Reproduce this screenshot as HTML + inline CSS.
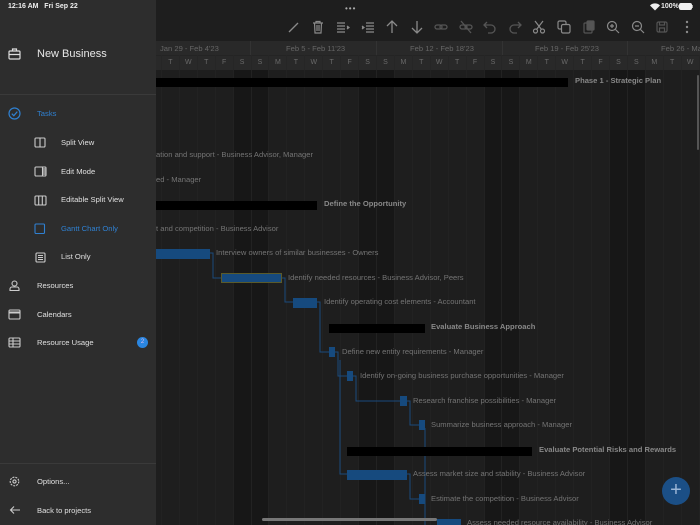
<!DOCTYPE html>
<html><head><meta charset="utf-8"><style>
*{margin:0;padding:0;box-sizing:border-box}
html,body{width:700px;height:525px;overflow:hidden}
body{background:#1e1e1e;font-family:"Liberation Sans",sans-serif;position:relative}
.abs{position:absolute}
.hdr{position:absolute;left:144px;top:55px;height:15px;display:flex}
.hdr span{width:17.93px;flex:none;text-align:center;font-size:7px;color:#6a6a6a;line-height:15px;border-right:1px solid #262626}
.cols{position:absolute;left:144px;top:70px;height:455px;display:flex}
.cols div{width:17.93px;flex:none;border-right:1px solid #222}
.cols div.w{background:#171717}
.t{position:absolute;font-size:7.6px;color:#747474;white-space:nowrap;line-height:10px}
.b{font-weight:bold;color:#888}
.bar{position:absolute;height:10px;background:#164a7e}
.sum{position:absolute;height:9px;background:#000}
.side{position:absolute;left:0;top:0;width:156px;height:525px;background:#2d2d2d}
.it{position:absolute;font-size:7.6px;color:#e0e0e0;white-space:nowrap}
.tb svg{position:absolute;top:20px}
</style></head><body>
<div class="abs" style="left:156px;top:41px;width:544px;height:29px;background:#292929"></div>
<div class="abs" style="left:156px;top:55px;width:544px;height:1px;background:#242424"></div>
<div class="abs" style="left:250px;top:41px;width:1px;height:14px;background:#333"></div>
<div class="abs" style="left:376px;top:41px;width:1px;height:14px;background:#333"></div>
<div class="abs" style="left:502px;top:41px;width:1px;height:14px;background:#333"></div>
<div class="abs" style="left:627px;top:41px;width:1px;height:14px;background:#333"></div>
<div class="t" style="left:160px;top:44px;color:#666">Jan 29 - Feb 4'23</div>
<div class="t" style="left:286px;top:44px;color:#666">Feb 5 - Feb 11'23</div>
<div class="t" style="left:410px;top:44px;color:#666">Feb 12 - Feb 18'23</div>
<div class="t" style="left:535px;top:44px;color:#666">Feb 19 - Feb 25'23</div>
<div class="t" style="left:661px;top:44px;color:#666">Feb 26 - Mar</div>
<div class="hdr"><span>M</span><span>T</span><span>W</span><span>T</span><span>F</span><span>S</span><span>S</span><span>M</span><span>T</span><span>W</span><span>T</span><span>F</span><span>S</span><span>S</span><span>M</span><span>T</span><span>W</span><span>T</span><span>F</span><span>S</span><span>S</span><span>M</span><span>T</span><span>W</span><span>T</span><span>F</span><span>S</span><span>S</span><span>M</span><span>T</span><span>W</span></div>
<div class="cols"><div></div><div></div><div></div><div></div><div></div><div class="w"></div><div class="w"></div><div></div><div></div><div></div><div></div><div></div><div class="w"></div><div class="w"></div><div></div><div></div><div></div><div></div><div></div><div class="w"></div><div class="w"></div><div></div><div></div><div></div><div></div><div></div><div class="w"></div><div class="w"></div><div></div><div></div><div></div></div>

<svg class="abs" style="left:0;top:0" width="700" height="525"><g fill="none" stroke="#1a4a7c" stroke-width="1">
<path d="M210 253H213V278H221"/><path d="M282 278H285V302H293"/><path d="M317 302H320V352H329"/>
<path d="M335 352H338V376H347"/><path d="M353 376H356V401H400"/><path d="M407 401H410V425H419"/>
<path d="M340 360V474H347"/><path d="M407 474H410V499H419"/><path d="M425 428V525"/><path d="M431 520H437"/>
</g></svg>

<div class="sum" style="left:156px;top:78px;width:412px"></div>
<div class="t b" style="left:575px;top:76px">Phase 1 - Strategic Plan</div>
<div class="t" style="left:156px;top:150px">ation and support - Business Advisor, Manager</div>
<div class="t" style="left:156px;top:175px">ed - Manager</div>
<div class="sum" style="left:156px;top:201px;width:161px"></div>
<div class="t b" style="left:324px;top:199px">Define the Opportunity</div>
<div class="t" style="left:156px;top:224px">t and competition - Business Advisor</div>
<div class="bar" style="left:156px;top:249px;width:54px"></div>
<div class="t" style="left:216px;top:248px">Interview owners of similar businesses - Owners</div>
<div class="bar" style="left:221px;top:273px;width:61px;border:1px solid #5a5a2a"></div>
<div class="t" style="left:288px;top:273px">Identify needed resources - Business Advisor, Peers</div>
<div class="bar" style="left:293px;top:298px;width:24px"></div>
<div class="t" style="left:324px;top:297px">Identify operating cost elements - Accountant</div>
<div class="sum" style="left:329px;top:324px;width:96px"></div>
<div class="t b" style="left:431px;top:322px">Evaluate Business Approach</div>
<div class="bar" style="left:329px;top:347px;width:6px"></div>
<div class="t" style="left:342px;top:347px">Define new entity requirements - Manager</div>
<div class="bar" style="left:347px;top:371px;width:6px"></div>
<div class="t" style="left:360px;top:371px">Identify on-going business purchase opportunities - Manager</div>
<div class="bar" style="left:400px;top:396px;width:7px"></div>
<div class="t" style="left:413px;top:396px">Research franchise possibilities - Manager</div>
<div class="bar" style="left:419px;top:420px;width:6px"></div>
<div class="t" style="left:431px;top:420px">Summarize business approach - Manager</div>
<div class="sum" style="left:347px;top:447px;width:185px"></div>
<div class="t b" style="left:539px;top:445px">Evaluate Potential Risks and Rewards</div>
<div class="bar" style="left:347px;top:470px;width:60px"></div>
<div class="t" style="left:413px;top:469px">Assess market size and stability - Business Advisor</div>
<div class="bar" style="left:419px;top:494px;width:6px"></div>
<div class="t" style="left:431px;top:494px">Estimate the competition - Business Advisor</div>
<div class="bar" style="left:437px;top:519px;width:24px"></div>
<div class="t" style="left:467px;top:518px">Assess needed resource availability - Business Advisor</div>

<div class="abs" style="left:697px;top:75px;width:2px;height:75px;background:#555;border-radius:1px"></div>
<div class="abs" style="left:662px;top:477px;width:28px;height:28px;border-radius:50%;background:#1b4f86;color:#9bb6d6;font-size:20px;line-height:27px;text-align:center">+</div>
<div class="abs" style="left:262px;top:518px;width:175px;height:3px;background:#777;border-radius:2px"></div>

<div class="tb"><svg style="left:286px" width="14" height="14"><path d="M3 12L12 3" stroke="#8a8a8a" stroke-width="1.3"/></svg>
<svg style="left:311px" width="14" height="14" fill="none" stroke="#8a8a8a" stroke-width="1.2"><path d="M2 3H12M5 3V1.5H9V3M3.5 3L4 13H10L10.5 3M6 5V11M8 5V11"/></svg>
<svg style="left:336px" width="14" height="14" fill="none" stroke="#8a8a8a" stroke-width="1.2"><path d="M1 3H9M1 6H9M1 9H9M1 12H9"/><path d="M11 6L13 7.5L11 9" fill="#8a8a8a"/></svg>
<svg style="left:361px" width="14" height="14" fill="none" stroke="#8a8a8a" stroke-width="1.2"><path d="M5 3H13M5 6H13M5 9H13M5 12H13"/><path d="M1 6L3 7.5L1 9" fill="#8a8a8a"/></svg>
<svg style="left:385px" width="14" height="14" fill="none" stroke="#8a8a8a" stroke-width="1.3"><path d="M7 13V1M2 6L7 1L12 6"/></svg>
<svg style="left:410px" width="14" height="14" fill="none" stroke="#8a8a8a" stroke-width="1.3"><path d="M7 1V13M2 8L7 13L12 8"/></svg>
<svg style="left:434px" width="14" height="14" fill="none" stroke="#555" stroke-width="1.3"><rect x="1" y="5" width="7" height="4" rx="2"/><rect x="6" y="5" width="7" height="4" rx="2"/></svg>
<svg style="left:459px" width="14" height="14" fill="none" stroke="#555" stroke-width="1.3"><rect x="1" y="5" width="7" height="4" rx="2"/><rect x="6" y="5" width="7" height="4" rx="2"/><path d="M2 1L12 13"/></svg>
<svg style="left:483px" width="14" height="14" fill="none" stroke="#555" stroke-width="1.3"><path d="M4 2L1 5L4 8M1 5H8A4 4 0 0 1 8 13H5"/></svg>
<svg style="left:508px" width="14" height="14" fill="none" stroke="#555" stroke-width="1.3"><path d="M10 2L13 5L10 8M13 5H6A4 4 0 0 0 6 13H9"/></svg>
<svg style="left:532px" width="14" height="14" fill="none" stroke="#8a8a8a" stroke-width="1.2"><circle cx="3.5" cy="11" r="2"/><circle cx="10.5" cy="11" r="2"/><path d="M4.5 9.5L11 1M9.5 9.5L3 1"/></svg>
<svg style="left:557px" width="14" height="14" fill="none" stroke="#8a8a8a" stroke-width="1.2"><rect x="1" y="1" width="8" height="8" rx="1.5"/><rect x="4.5" y="4.5" width="8.5" height="8.5" rx="1.5" fill="#1e1e1e"/></svg>
<svg style="left:582px" width="14" height="14" fill="none" stroke="#555" stroke-width="1.2"><rect x="2" y="3" width="8" height="10" rx="1"/><rect x="5" y="1" width="7" height="9" rx="1" fill="#555"/></svg>
<svg style="left:606px" width="14" height="14" fill="none" stroke="#8a8a8a" stroke-width="1.2"><circle cx="6" cy="6" r="4.5"/><path d="M9.5 9.5L13 13M4 6H8M6 4V8"/></svg>
<svg style="left:631px" width="14" height="14" fill="none" stroke="#8a8a8a" stroke-width="1.2"><circle cx="6" cy="6" r="4.5"/><path d="M9.5 9.5L13 13M4 6H8"/></svg>
<svg style="left:655px" width="14" height="14" fill="none" stroke="#555" stroke-width="1.2"><rect x="2" y="2" width="10" height="10" rx="1.5"/><path d="M4.5 2V5H9.5V2M4.5 12V8H9.5V12"/></svg>
<svg style="left:680px" width="14" height="14" fill="#8a8a8a"><circle cx="7" cy="2" r="1.2"/><circle cx="7" cy="7" r="1.2"/><circle cx="7" cy="12" r="1.2"/></svg></div>

<div class="abs" style="left:345px;top:4px;font-size:8px;color:#aaa;letter-spacing:1px">•••</div>
<svg class="abs" style="left:650px;top:3px" width="10" height="8"><path d="M5 7.5L0 2.5A7 7 0 0 1 10 2.5Z" fill="#eee"/></svg>
<div class="abs" style="left:661px;top:3px;font-size:7px;color:#eee;font-weight:bold">100%</div>
<div class="abs" style="left:679px;top:3px;width:13px;height:7px;border-radius:2px;background:#eee"></div>
<div class="abs" style="left:692px;top:5px;width:1px;height:3px;background:#aaa"></div>

<div class="side">
<div class="abs" style="left:8px;top:3px;font-size:7px;color:#eee;font-weight:bold">12:16 AM&nbsp;&nbsp;&nbsp;Fri Sep 22</div>
<svg class="abs" style="left:8px;top:48px" width="13" height="12" fill="none" stroke="#ddd" stroke-width="1.2"><rect x="1" y="3" width="11" height="8" rx="1"/><path d="M4.5 3V1H8.5V3M1 6.5H12"/></svg>
<div class="abs" style="left:37px;top:48px;font-size:11px;color:#e8e8e8">New Business</div>
<div class="abs" style="left:0;top:94px;width:156px;height:1px;background:#3a3a3a"></div>
<svg class="abs" style="left:8px;top:107px" width="13" height="13" fill="none" stroke="#2f80d1" stroke-width="1.2"><circle cx="6.5" cy="6.5" r="5.5"/><path d="M3.8 6.7L5.8 8.7L9.3 4.6"/></svg>
<div class="it" style="left:37px;top:109px;color:#2f80d1">Tasks</div>
<svg class="abs" style="left:34px;top:137px" width="12" height="11" fill="none" stroke="#ccc" stroke-width="1.1"><rect x="1" y="1" width="10" height="9" rx="1"/><path d="M6 1V10"/></svg>
<div class="it" style="left:61px;top:138px">Split View</div>
<svg class="abs" style="left:34px;top:166px" width="13" height="11" fill="none" stroke="#ccc" stroke-width="1.1"><rect x="1" y="1" width="11" height="9" rx="1"/><path d="M8.5 1V10"/><path d="M9 2H11.5V9H9Z" fill="#888" stroke="none"/></svg>
<div class="it" style="left:61px;top:167px">Edit Mode</div>
<svg class="abs" style="left:34px;top:195px" width="13" height="11" fill="none" stroke="#ccc" stroke-width="1.1"><rect x="1" y="1" width="11" height="9" rx="1"/><path d="M4.7 1V10M8.3 1V10"/></svg>
<div class="it" style="left:61px;top:195px">Editable Split View</div>
<svg class="abs" style="left:34px;top:223px" width="12" height="11" fill="none" stroke="#2f80d1" stroke-width="1.1"><rect x="1" y="1" width="9.5" height="9.5" rx="1"/></svg>
<div class="it" style="left:61px;top:224px;color:#2f80d1">Gantt Chart Only</div>
<svg class="abs" style="left:35px;top:252px" width="11" height="11" fill="none" stroke="#ccc" stroke-width="1.1"><rect x="1" y="1" width="9" height="9" rx="1"/><path d="M3 3.5H8M3 5.5H8M3 7.5H8"/></svg>
<div class="it" style="left:61px;top:252px">List Only</div>
<svg class="abs" style="left:9px;top:280px" width="11" height="11" fill="none" stroke="#ccc" stroke-width="1.1"><circle cx="5.5" cy="3.5" r="2.5"/><path d="M1 10.5V9A2 2 0 0 1 3 7H8A2 2 0 0 1 10 9V10.5Z"/></svg>
<div class="it" style="left:37px;top:281px">Resources</div>
<svg class="abs" style="left:8px;top:309px" width="13" height="11" fill="none" stroke="#ccc" stroke-width="1.1"><rect x="1" y="1" width="11" height="9" rx="1"/><path d="M1 3.5H12" stroke-width="2"/></svg>
<div class="it" style="left:37px;top:310px">Calendars</div>
<svg class="abs" style="left:8px;top:337px" width="13" height="11" fill="none" stroke="#ccc" stroke-width="1.1"><rect x="1" y="1" width="11" height="9" rx="1"/><path d="M1 4H12M1 7H12M5 1V10"/></svg>
<div class="it" style="left:37px;top:338px">Resource Usage</div>
<div class="abs" style="left:137px;top:337px;width:11px;height:11px;border-radius:50%;background:#2a86e0;color:#dbe;font-size:6px;line-height:11px;text-align:center">2</div>
<div class="abs" style="left:0;top:463px;width:156px;height:1px;background:#3a3a3a"></div>
<svg class="abs" style="left:9px;top:476px" width="11" height="11" fill="none" stroke="#ccc" stroke-width="1.1"><circle cx="5.5" cy="5.5" r="4.3" stroke-dasharray="2 1"/><circle cx="5.5" cy="5.5" r="1.6"/></svg>
<div class="it" style="left:37px;top:477px">Options...</div>
<svg class="abs" style="left:9px;top:505px" width="12" height="10" fill="none" stroke="#ccc" stroke-width="1.1"><path d="M11 5H1.5M5 1.5L1.5 5L5 8.5"/></svg>
<div class="it" style="left:37px;top:506px">Back to projects</div>
</div>
</body></html>
